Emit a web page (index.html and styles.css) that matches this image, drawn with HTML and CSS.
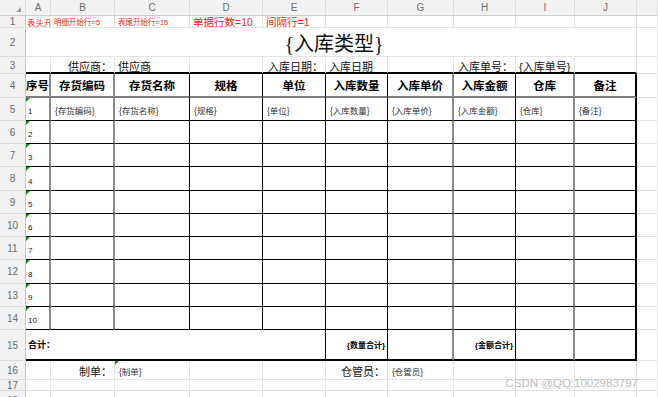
FILE: index.html
```html
<!DOCTYPE html>
<html lang="zh-CN">
<head>
<meta charset="utf-8">
<title>入库单模板</title>
<link rel="stylesheet" href="styles.css">
</head>
<body>
<div class="sheet">
  <div class="tr colhead">
    <div class="c hd corner"></div>
    <div class="c hd">A</div><div class="c hd">B</div><div class="c hd">C</div><div class="c hd">D</div><div class="c hd">E</div>
    <div class="c hd">F</div><div class="c hd">G</div><div class="c hd">H</div><div class="c hd">I</div><div class="c hd">J</div>
    <div class="c hd"></div>
  </div>

  <div class="tr">
    <div class="c rh">1</div>
    <div class="c red s9">表头开始行=3</div>
    <div class="c red s7">明细开始行=5</div>
    <div class="c red s7">表尾开始行=15</div>
    <div class="c red s10">单据行数=10</div>
    <div class="c red s10">间隔行=1</div>
    <div class="c"></div><div class="c"></div><div class="c"></div><div class="c"></div><div class="c"></div><div class="c"></div>
  </div>

  <div class="tr">
    <div class="c rh">2</div>
    <div class="c title">{入库类型}</div>
    <div class="c"></div>
  </div>

  <div class="tr r3">
    <div class="c rh">3</div>
    <div class="c"></div>
    <div class="c lbl right">供应商：</div>
    <div class="c lbl">供应商</div>
    <div class="c"></div>
    <div class="c lbl right">入库日期：</div>
    <div class="c lbl">入库日期</div>
    <div class="c"></div>
    <div class="c lbl right">入库单号：</div>
    <div class="c lbl">{入库单号}</div>
    <div class="c"></div>
    <div class="c"></div>
  </div>

  <div class="tr tb hdr">
    <div class="c rh">4</div>
    <div class="c th">序号</div>
    <div class="c th">存货编码</div>
    <div class="c th">存货名称</div>
    <div class="c th">规格</div>
    <div class="c th">单位</div>
    <div class="c th">入库数量</div>
    <div class="c th">入库单价</div>
    <div class="c th">入库金额</div>
    <div class="c th">仓库</div>
    <div class="c th">备注</div>
    <div class="c"></div>
  </div>

  <div class="tr tb first">
    <div class="c rh">5</div>
    <div class="c num flag">1</div>
    <div class="c fld">{存货编码}</div>
    <div class="c fld">{存货名称}</div>
    <div class="c fld">{规格}</div>
    <div class="c fld">{单位}</div>
    <div class="c fld">{入库数量}</div>
    <div class="c fld">{入库单价}</div>
    <div class="c fld">{入库金额}</div>
    <div class="c fld">{仓库}</div>
    <div class="c fld">{备注}</div>
    <div class="c"></div>
  </div>

  <div class="tr tb">
    <div class="c rh">6</div><div class="c num flag">2</div>
    <div class="c"></div><div class="c"></div><div class="c"></div><div class="c"></div><div class="c"></div><div class="c"></div><div class="c"></div><div class="c"></div><div class="c"></div><div class="c"></div>
  </div>
  <div class="tr tb">
    <div class="c rh">7</div><div class="c num flag">3</div>
    <div class="c"></div><div class="c"></div><div class="c"></div><div class="c"></div><div class="c"></div><div class="c"></div><div class="c"></div><div class="c"></div><div class="c"></div><div class="c"></div>
  </div>
  <div class="tr tb">
    <div class="c rh">8</div><div class="c num flag">4</div>
    <div class="c"></div><div class="c"></div><div class="c"></div><div class="c"></div><div class="c"></div><div class="c"></div><div class="c"></div><div class="c"></div><div class="c"></div><div class="c"></div>
  </div>
  <div class="tr tb">
    <div class="c rh">9</div><div class="c num flag">5</div>
    <div class="c"></div><div class="c"></div><div class="c"></div><div class="c"></div><div class="c"></div><div class="c"></div><div class="c"></div><div class="c"></div><div class="c"></div><div class="c"></div>
  </div>
  <div class="tr tb">
    <div class="c rh">10</div><div class="c num flag">6</div>
    <div class="c"></div><div class="c"></div><div class="c"></div><div class="c"></div><div class="c"></div><div class="c"></div><div class="c"></div><div class="c"></div><div class="c"></div><div class="c"></div>
  </div>
  <div class="tr tb">
    <div class="c rh">11</div><div class="c num flag">7</div>
    <div class="c"></div><div class="c"></div><div class="c"></div><div class="c"></div><div class="c"></div><div class="c"></div><div class="c"></div><div class="c"></div><div class="c"></div><div class="c"></div>
  </div>
  <div class="tr tb">
    <div class="c rh">12</div><div class="c num flag">8</div>
    <div class="c"></div><div class="c"></div><div class="c"></div><div class="c"></div><div class="c"></div><div class="c"></div><div class="c"></div><div class="c"></div><div class="c"></div><div class="c"></div>
  </div>
  <div class="tr tb">
    <div class="c rh">13</div><div class="c num flag">9</div>
    <div class="c"></div><div class="c"></div><div class="c"></div><div class="c"></div><div class="c"></div><div class="c"></div><div class="c"></div><div class="c"></div><div class="c"></div><div class="c"></div>
  </div>
  <div class="tr tb">
    <div class="c rh">14</div><div class="c num flag">10</div>
    <div class="c"></div><div class="c"></div><div class="c"></div><div class="c"></div><div class="c"></div><div class="c"></div><div class="c"></div><div class="c"></div><div class="c"></div><div class="c"></div>
  </div>

  <div class="tr total">
    <div class="c rh">15</div>
    <div class="c sum vb">合计：</div>
    <div class="c bsmall right vb">{数量合计}</div>
    <div class="c vg"></div>
    <div class="c bsmall right vb">{金额合计}</div>
    <div class="c vg"></div>
    <div class="c ve"></div>
    <div class="c"></div>
  </div>

  <div class="tr">
    <div class="c rh">16</div>
    <div class="c"></div>
    <div class="c lbl right">制单：</div>
    <div class="c fld flag">{制单}</div>
    <div class="c"></div>
    <div class="c"></div>
    <div class="c lbl right">仓管员：</div>
    <div class="c fld">{仓管员}</div>
    <div class="c"></div><div class="c"></div><div class="c"></div><div class="c"></div>
  </div>

  <div class="tr">
    <div class="c rh">17</div>
    <div class="c"></div><div class="c"></div><div class="c"></div><div class="c"></div><div class="c"></div><div class="c"></div><div class="c"></div><div class="c"></div><div class="c"></div><div class="c"></div><div class="c"></div>
  </div>
  <div class="tr">
    <div class="c rh">18</div>
    <div class="c"></div><div class="c"></div><div class="c"></div><div class="c"></div><div class="c"></div><div class="c"></div><div class="c"></div><div class="c"></div><div class="c"></div><div class="c"></div><div class="c"></div>
  </div>
</div>
<div class="watermark">CSDN @QQ:1002983797</div>
</body>
</html>
```

FILE: styles.css
```css
* { box-sizing: border-box; }

html, body {
  margin: 0;
  padding: 0;
  background: #ffffff;
}

body {
  position: relative;
  width: 658px;
  height: 397px;
  overflow: hidden;
  font-family: "Liberation Sans", "Noto Sans CJK SC", sans-serif;
  color: #1a1a1a;
}

.sheet {
  display: grid;
  grid-template-columns: 26px 25px 64px 75px 73px 63px 62px 66px 62px 59px 62px 1fr;
  grid-template-rows: 16px 12px 29px 17px 24px 23px 23px 23px 24px 23px 23px 23px 24px 23px 23px 31px 19px 11px 20px;
  width: 658px;
}

.tr { display: contents; }

.c {
  position: relative;
  display: flex;
  align-items: center;
  min-width: 0;
  overflow: hidden;
  white-space: nowrap;
  padding-left: 2px;
  border-right: 1px solid #e3e3e3;
  border-bottom: 1px solid #e3e3e3;
}

/* headers */
.hd {
  background: #f2f2f2;
  color: #6b6b6b;
  font-size: 10px;
  justify-content: center;
  padding-left: 0;
  border-right: 1px solid #dcdcdc;
  border-bottom: 1px solid #cfcfcf;
}

.corner::after {
  content: "";
  position: absolute;
  right: 4px;
  bottom: 3px;
  width: 0;
  height: 0;
  border-left: 5px solid transparent;
  border-bottom: 5px solid #9a9a9a;
}

.rh {
  background: #f2f2f2;
  color: #6b6b6b;
  font-size: 10px;
  justify-content: center;
  padding-left: 0;
  border-right: 1px solid #c9c9c9;
  border-bottom: 1px solid #dcdcdc;
}

/* row 1 notes */
.red { color: #ff1a1a; }
.s9 { font-size: 8.5px; padding-left: 1px; }
.s7 { font-size: 7.5px; padding-left: 3px; }
.s10 { font-size: 10.5px; padding-left: 3px; }

/* title */
.title {
  grid-column: span 10;
  justify-content: center;
  font-family: "Liberation Serif", "Noto Sans CJK SC", serif;
  font-size: 20px;
  color: #111;
  padding-left: 6px;
}

/* labels */
.lbl {
  font-size: 11px;
  color: #111;
  padding-top: 2px;
  padding-left: 3px;
}
.right {
  justify-content: flex-end;
  padding-left: 0;
  padding-right: 2px;
}

/* row 3 bottom = table top */
.r3 > :nth-child(n+2):nth-child(-n+11) {
  border-bottom: 2px solid #000;
}

/* table rows */
.tb > :nth-child(n+2):nth-child(-n+11) {
  border-bottom: 1px solid #000;
}
.tb > :nth-child(2),
.tb > :nth-child(3),
.tb > :nth-child(8),
.tb > :nth-child(10) {
  border-right: 2px solid #8a8a8a;
}
.tb > :nth-child(4),
.tb > :nth-child(5),
.tb > :nth-child(6),
.tb > :nth-child(7),
.tb > :nth-child(9) {
  border-right: 1px solid #000;
}
.tb > :nth-child(11) {
  border-right: 2px solid #000;
}
.hdr > :nth-child(n+2):nth-child(-n+11) {
  border-bottom: 2px solid #7d7d7d;
}

.th {
  justify-content: center;
  padding-left: 0;
  font-size: 11.5px;
  font-weight: bold;
  color: #000;
}

.num {
  font-size: 8px;
  color: #222;
  padding-left: 2px;
  padding-top: 5px;
}

.fld {
  font-size: 8.5px;
  color: #333;
  padding-left: 4px;
  padding-top: 2px;
}

.flag::before {
  content: "";
  position: absolute;
  top: 0;
  left: 0;
  width: 0;
  height: 0;
  border-top: 4px solid #1c8a1c;
  border-right: 4px solid transparent;
}

/* total row */
.total > .c:not(.rh):not(:last-child) {
  border-bottom: 2px solid #000;
}
.sum {
  grid-column: span 5;
  font-size: 9px;
  font-weight: bold;
  color: #000;
  padding-left: 2px;
}
.bsmall {
  font-size: 8px;
  font-weight: bold;
  color: #000;
}
.vb { border-right: 1px solid #000; }
.vg { border-right: 2px solid #8a8a8a; }
.ve { border-right: 2px solid #000; }

.watermark {
  position: absolute;
  right: 20px;
  top: 377px;
  font-family: "Liberation Sans", sans-serif;
  font-size: 11.5px;
  color: #bdbdbd;
  white-space: nowrap;
}
```
